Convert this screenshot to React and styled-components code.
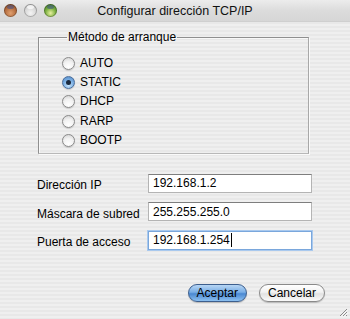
import React from "react";
import styled, { createGlobalStyle } from "styled-components";

const GlobalStyle = createGlobalStyle`
  html, body {
    margin: 0;
    padding: 0;
  }
  body {
    font-family: "Liberation Sans", "DejaVu Sans", sans-serif;
    -webkit-font-smoothing: antialiased;
  }
`;

const methods = ["AUTO", "STATIC", "DHCP", "RARP", "BOOTP"];

const fields = [
    { label: "Dirección IP", value: "192.168.1.2" },
    { label: "Máscara de subred", value: "255.255.255.0" },
    { label: "Puerta de acceso", value: "192.168.1.254", focused: true },
];

const App = () => {
    return (
        <>
            <GlobalStyle />
            <Window>
                <TitleBar>
                    <Lights>
                        <Light $color="red" />
                        <Light $color="off" />
                        <Light $color="green" />
                    </Lights>
                    <Title>Configurar dirección TCP/IP</Title>
                    <span />
                </TitleBar>

                <Content>
                    <Group>
                        <Legend>Método de arranque</Legend>
                        <RadioList>
                            {methods.map((m) => (
                                <RadioRow key={m}>
                                    <Radio $checked={m === "STATIC"} />
                                    <RadioLabel>{m}</RadioLabel>
                                </RadioRow>
                            ))}
                        </RadioList>
                    </Group>

                    <Form>
                        {fields.map((f) => (
                            <React.Fragment key={f.label}>
                                <FieldLabel>{f.label}</FieldLabel>
                                <Field $focused={f.focused}>
                                    {f.value}
                                    {f.focused && <Caret />}
                                </Field>
                            </React.Fragment>
                        ))}
                    </Form>

                    <Buttons>
                        <Button $primary>Aceptar</Button>
                        <Button>Cancelar</Button>
                    </Buttons>
                </Content>

                <Grip viewBox="0 0 10 10">
                    <path d="M9 2 L2 9 M9 5 L5 9 M9 8 L8 9" stroke="#8a8a8a" strokeWidth="1" />
                    <path d="M9.8 2.8 L2.8 9.8 M9.8 5.8 L5.8 9.8" stroke="#fff" strokeWidth="0.8" />
                </Grip>
            </Window>
        </>
    );
};

export default App;

const Window = styled.div`
    position: relative;
    width: 350px;
    height: 319px;
    overflow: hidden;
    background: repeating-linear-gradient(
        to bottom,
        #efefef 0px,
        #efefef 2px,
        #e8e8e8 2px,
        #e8e8e8 4px
    );
    color: #000;
`;

const TitleBar = styled.div`
    display: grid;
    grid-template-columns: 60px 1fr 60px;
    align-items: center;
    height: 22px;
    background: linear-gradient(to bottom, #ececec 0%, #dcdcdc 50%, #d6d6d6 100%);
    border-bottom: 1px solid #cfcfcf;
    box-sizing: border-box;
`;

const Lights = styled.div`
    display: flex;
    gap: 7px;
    padding-left: 4px;
`;

const lightColors = {
    red: "radial-gradient(circle at 50% 70%, #e0a070 0%, #b0683a 55%, #6e3a1c 100%)",
    off: "radial-gradient(circle at 50% 70%, #f4f4f4 0%, #d6d6d6 55%, #a8a8a8 100%)",
    green: "radial-gradient(circle at 50% 70%, #e8f0a0 0%, #7cb040 45%, #2f6a22 100%)",
};

const Light = styled.span`
    position: relative;
    width: 13px;
    height: 13px;
    border-radius: 50%;
    background: ${(p) => lightColors[p.$color]};
    box-shadow: inset 0 0 0 1px rgba(0, 0, 0, 0.25);

    &::after {
        content: "";
        position: absolute;
        top: 1px;
        left: 3px;
        width: 7px;
        height: 4px;
        border-radius: 50%;
        background: ${(p) => (p.$color === "off" ? "rgba(255,255,255,0.7)" : "rgba(60,80,140,0.55)")};
    }
`;

const Title = styled.div`
    text-align: center;
    font-size: 12.5px;
    color: #111;
    white-space: nowrap;
`;

const Content = styled.div`
    padding-top: 8px;
`;

const Group = styled.fieldset`
    margin: 0 41px 0 38px;
    padding: 9px 0 3px 23px;
    border: 1px solid #8f8f8f;
    border-right-color: #a8a8a8;
    border-bottom-color: #b8b8b8;
    box-shadow: inset 1px 1px 0 #f8f8f8, 1px 1px 0 #fafafa;
    min-width: 0;
`;

const Legend = styled.legend`
    padding: 0 1px;
    margin-left: 5px;
    font-size: 12px;
    line-height: 15px;
`;

const RadioList = styled.div`
    display: flex;
    flex-direction: column;
`;

const RadioRow = styled.div`
    display: flex;
    align-items: center;
    height: 19.2px;
    gap: 5px;
`;

const Radio = styled.span`
    position: relative;
    width: 13px;
    height: 13px;
    border-radius: 50%;
    box-sizing: border-box;
    border: 1px solid ${(p) => (p.$checked ? "#4a6d9a" : "#8a8a8a")};
    background: ${(p) =>
        p.$checked
            ? "radial-gradient(circle at 50% 75%, #c8e4fb 0%, #7fb2e5 50%, #4f86c4 100%)"
            : "radial-gradient(circle at 50% 80%, #ffffff 0%, #f2f2f2 50%, #cfcfcf 100%)"};
    box-shadow: 0 1px 1px rgba(0, 0, 0, 0.15);

    &::after {
        content: "";
        display: ${(p) => (p.$checked ? "block" : "none")};
        position: absolute;
        left: 50%;
        top: 50%;
        width: 5px;
        height: 5px;
        margin: -2.5px 0 0 -2.5px;
        border-radius: 50%;
        background: #1b2a3e;
    }
`;

const RadioLabel = styled.span`
    font-size: 12px;
    line-height: 15px;
`;

const Form = styled.div`
    display: grid;
    grid-template-columns: 111px 164px;
    row-gap: 9.5px;
    align-items: center;
    margin: 20px 0 0 37px;
`;

const FieldLabel = styled.div`
    font-size: 12px;
    padding-top: 4px;
    white-space: nowrap;
`;

const Field = styled.div`
    display: flex;
    align-items: center;
    height: 19px;
    box-sizing: border-box;
    padding-left: 4px;
    background: #fff;
    font-size: 12px;
    border: 1px solid ${(p) => (p.$focused ? "#7aa7dc" : "#b4b4b4")};
    border-top-color: ${(p) => (p.$focused ? "#7aa7dc" : "#7e7e7e")};
    box-shadow: ${(p) => (p.$focused ? "0 0 0 1px #a9c9ee" : "none")};
`;

const Caret = styled.span`
    width: 1px;
    height: 14px;
    background: #000;
    margin-left: 1px;
`;

const Buttons = styled.div`
    display: flex;
    justify-content: flex-end;
    gap: 12px;
    margin: 34px 25px 0 0;
`;

const Button = styled.div`
    height: 18px;
    box-sizing: border-box;
    padding: 0 8px;
    border-radius: 9px;
    font-size: 12px;
    line-height: 16px;
    display: flex;
    align-items: center;
    border: 1px solid ${(p) => (p.$primary ? "#3d5f8e" : "#8a8a8a")};
    background: ${(p) =>
        p.$primary
            ? "linear-gradient(to bottom, #b8d6f4 0%, #79aee6 45%, #4a88d2 55%, #8cc0f0 100%)"
            : "linear-gradient(to bottom, #ffffff 0%, #f2f2f2 45%, #e2e2e2 55%, #fafafa 100%)"};
    box-shadow: 0 1px 1px rgba(0, 0, 0, 0.2);
`;

const Grip = styled.svg`
    position: absolute;
    right: 2px;
    bottom: 2px;
    width: 10px;
    height: 10px;
`;
